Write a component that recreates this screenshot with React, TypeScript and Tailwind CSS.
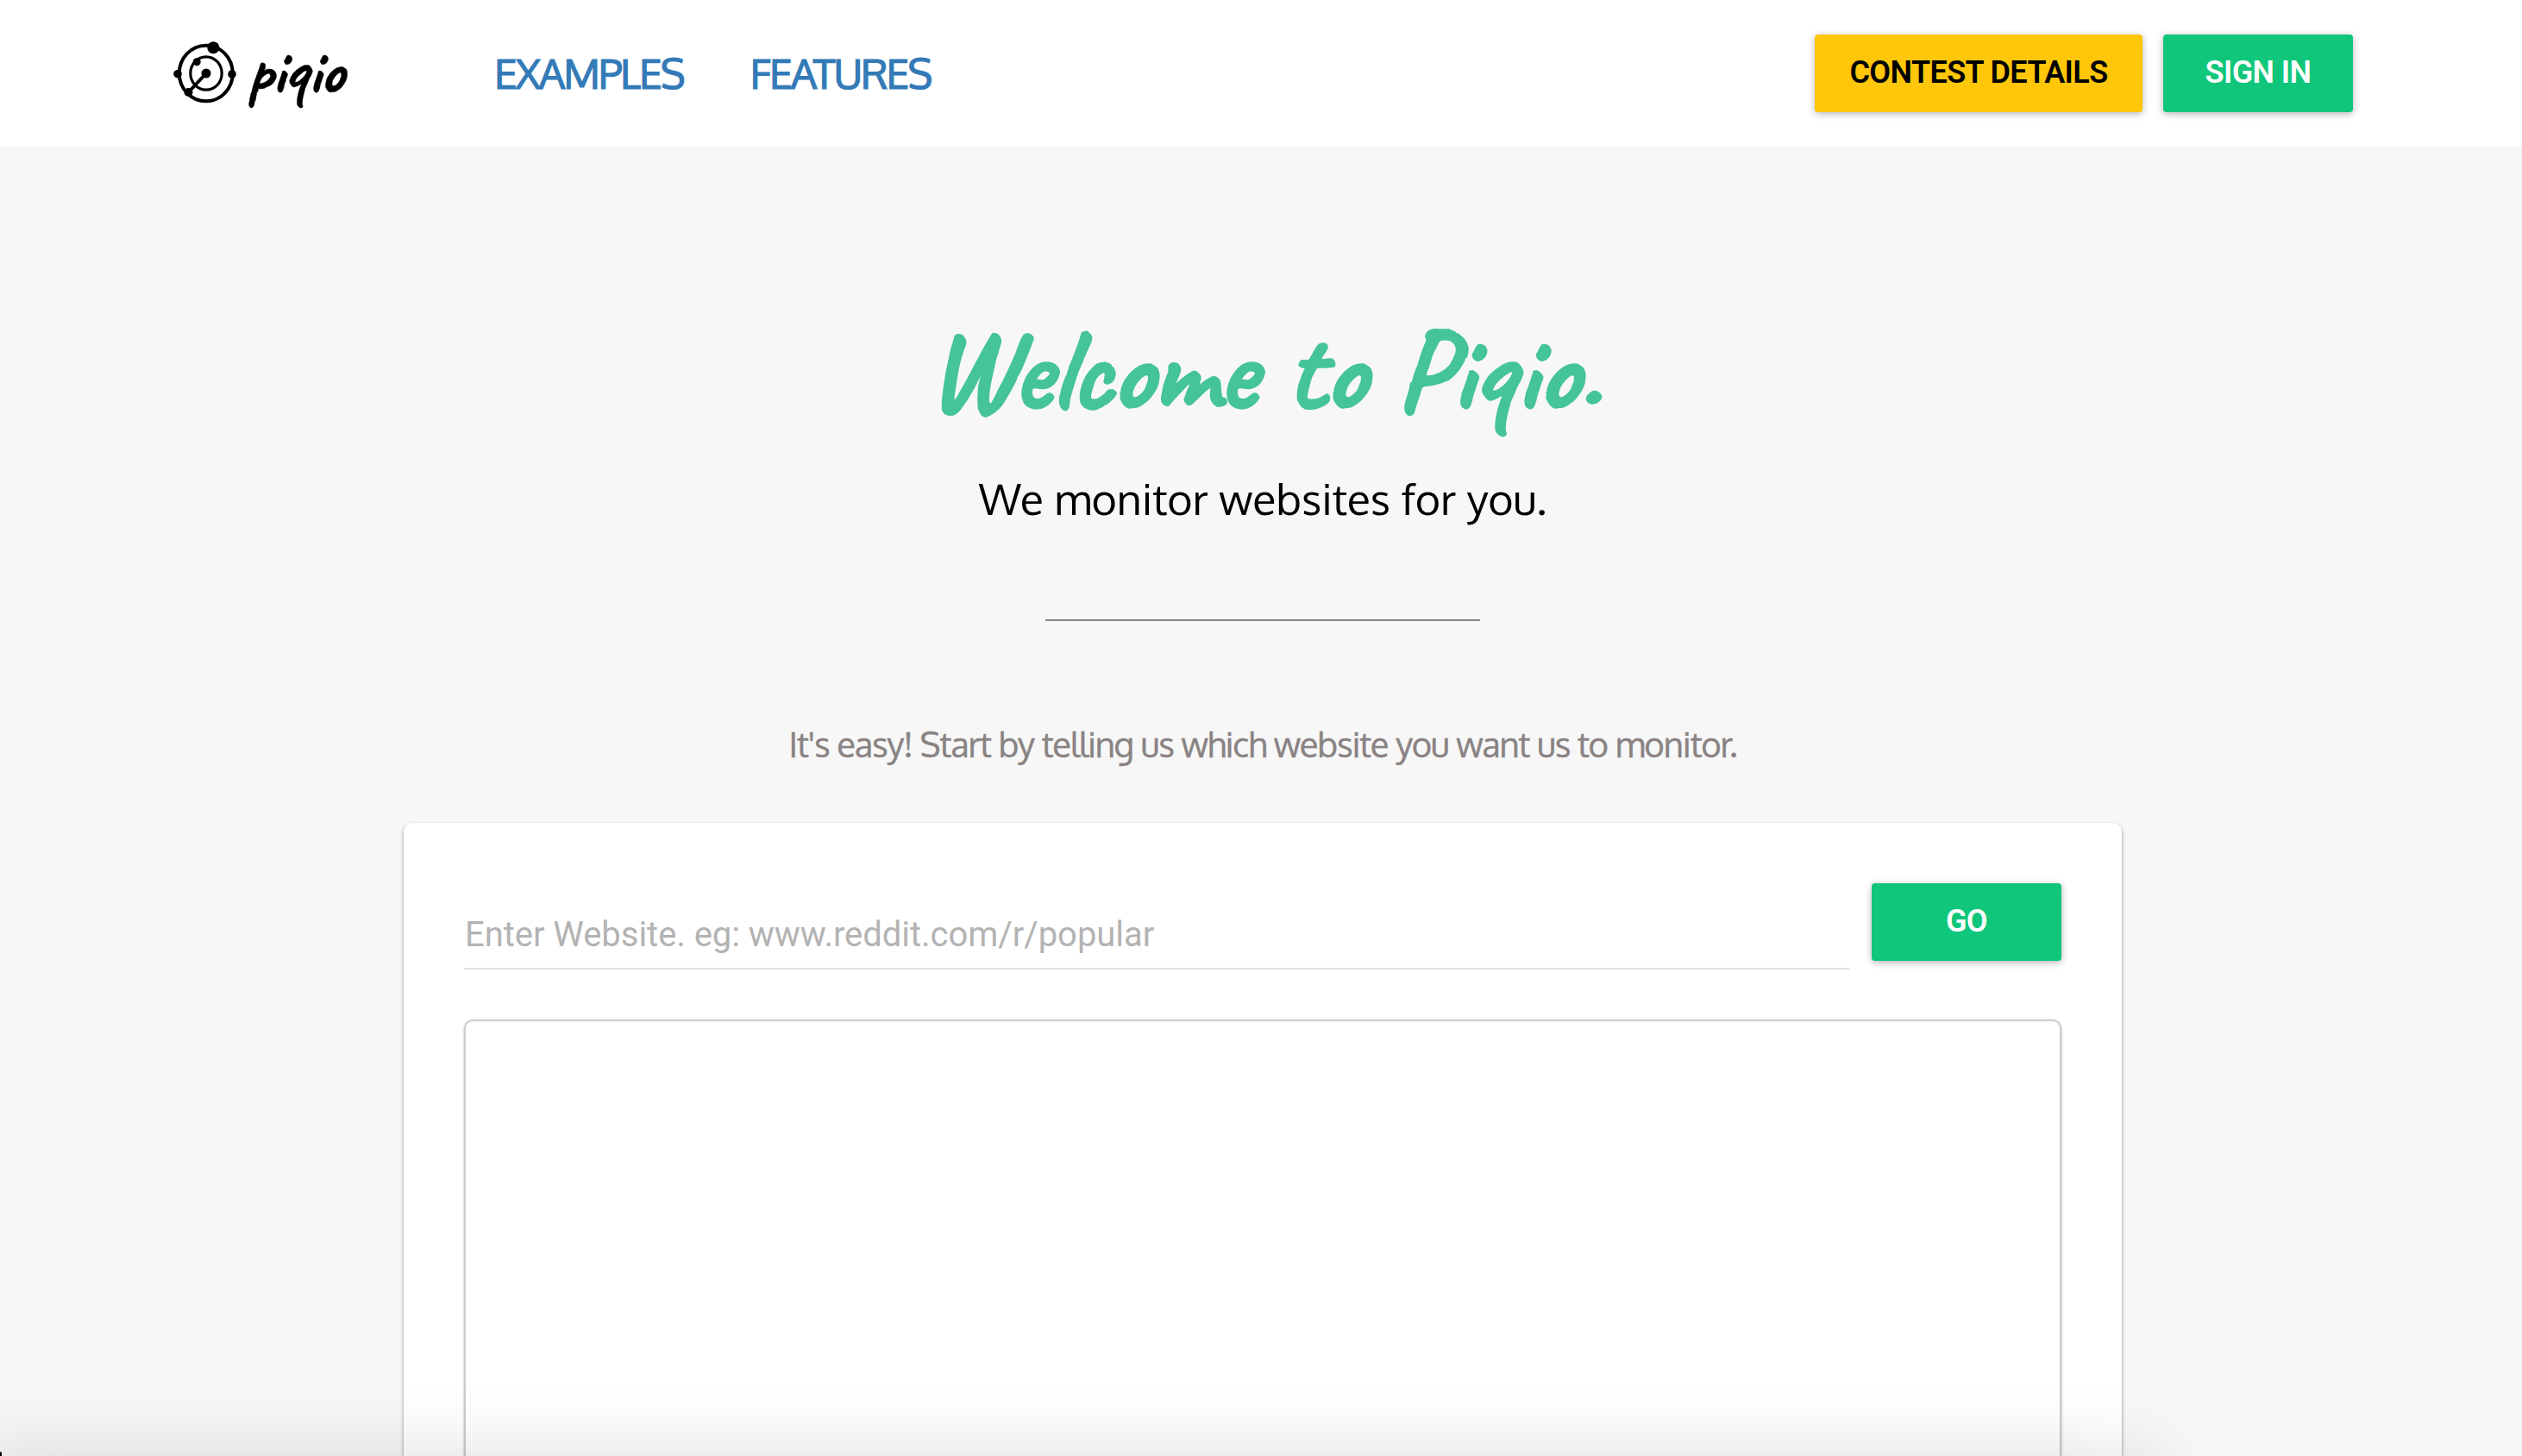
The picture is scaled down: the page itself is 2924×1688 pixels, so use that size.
import React, {useState} from "react";

const Logo = () => (
    <a href="#" className="flex items-center w-[210px] h-[100px] shrink-0">
        <svg width="80" height="100" viewBox="0 0 80 100" fill="none" stroke="#000" className="shrink-0">
            <ellipse cx="38.8" cy="50" rx="31" ry="32.3" strokeWidth="4" />
            <ellipse cx="39" cy="50" rx="18.2" ry="19.2" strokeWidth="3.2" />
            <path d="M39 50L18.5 72" strokeWidth="4" />
            <g fill="#000" stroke="none">
                <circle cx="39" cy="50" r="5.5" />
                <circle cx="47.3" cy="20.3" r="7" />
                <circle cx="28.2" cy="36.7" r="4.5" />
                <circle cx="6" cy="50.7" r="4.8" />
                <circle cx="69" cy="51" r="4.8" />
                <circle cx="18.5" cy="72" r="5" />
            </g>
        </svg>
        <span className="ml-[7px] pb-[7px] font-['Caveat','Caveat_Brush',cursive] text-[77px] leading-none font-bold tracking-[-1.2px] [-webkit-text-stroke:0.4px_#000]">
            piqio
        </span>
    </a>
);

const App = () => {

    const [website, setWebsite] = useState('');

    const handleSubmit = (event: React.FormEvent<HTMLFormElement>) => {
        event.preventDefault();
    };

    return (
        <div className="relative flex flex-col w-[2924px] h-[1688px] overflow-hidden bg-[#f7f7f7] text-black">
            <header className="flex items-center shrink-0 h-[170px] pl-[200px] pr-[196px] bg-white">
                <Logo />
                <nav className="flex gap-[77px] ml-[163px] pb-[2px] font-['Oxygen','Noto_Sans',sans-serif] text-[48px] leading-none tracking-[-2px] text-[#337ab7] [-webkit-text-stroke:1.2px_#337ab7]">
                    <a href="#examples">EXAMPLES</a>
                    <a href="#features">FEATURES</a>
                </nav>
                <div className="flex gap-6 ml-auto font-[Roboto,sans-serif] text-[36px] leading-none font-semibold tracking-[-0.6px]">
                    <button className="w-[380px] h-[90px] pb-[3px] rounded-[4px] bg-[#ffc60a] shadow-[0_2px_8px_rgba(0,0,0,0.3)]">
                        CONTEST DETAILS
                    </button>
                    <button className="w-[220px] h-[90px] pb-[3px] rounded-[4px] bg-[#10c67a] text-white shadow-[0_2px_8px_rgba(0,0,0,0.3)]">
                        SIGN IN
                    </button>
                </div>
            </header>

            <main className="flex flex-col items-center grow pl-1">
                <h1 className="mt-[191px] font-['Caveat','Caveat_Brush',cursive] text-[136px] leading-none font-bold tracking-[-1.8px] [word-spacing:6px] text-[#45c498] [-webkit-text-stroke:1.5px_#45c498]">
                    Welcome to Piqio.
                </h1>
                <p className="mt-[56px] font-['Oxygen','Noto_Sans',sans-serif] text-[50px] leading-none">
                    We monitor websites for you.
                </p>
                <hr className="w-[504px] h-[2px] mt-[115px] border-0 bg-[#898383]" />
                <p className="mt-[122px] font-['Oxygen','Noto_Sans',sans-serif] text-[40px] leading-none tracking-[-1.1px] text-[#898383] [-webkit-text-stroke:0.4px_#898383]">
                    It's easy! Start by telling us which website you want us to monitor.
                </p>

                <section className="flex flex-col w-[1992px] grow mt-[72px] px-[70px] pt-[70px] rounded-t-[10px] bg-white shadow-[0_2px_4px_rgba(0,0,0,0.4)]">
                    <form onSubmit={handleSubmit} className="flex items-start gap-[26px] h-[158px]">
                        <input
                            type="text"
                            value={website}
                            onChange={(e) => setWebsite(e.target.value)}
                            className="w-[1606px] h-[100px] pt-[21px] pl-[1px] font-[Roboto,sans-serif] text-[40px] tracking-[-0.04px] border-b-2 border-[#e0e0e0] placeholder-[#b3b3b3] outline-none"
                            placeholder="Enter Website. eg: www.reddit.com/r/popular"
                        />
                        <button
                            type="submit"
                            className="w-[220px] h-[90px] pb-[3px] rounded-[4px] bg-[#10c67a] font-[Roboto,sans-serif] text-[36px] leading-none font-semibold tracking-[-0.6px] text-white shadow-[0_2px_8px_rgba(0,0,0,0.3)]"
                        >
                            GO
                        </button>
                    </form>
                    <div className="grow border-2 border-b-0 border-[#ccc] rounded-t-[10px] shadow-[0_1px_3px_rgba(0,0,0,0.3)]" />
                </section>
            </main>

            {/* soft shade along the bottom edge */}
            <div className="absolute -left-[30px] top-[1690px] w-[2525px] h-[200px] shadow-[0_0_90px_rgba(0,0,0,0.14)] pointer-events-none" />
            <div className="absolute left-0 bottom-0 w-[2px] h-[5px] rounded-tr-full bg-black" />
        </div>
    );
}

export default App;
